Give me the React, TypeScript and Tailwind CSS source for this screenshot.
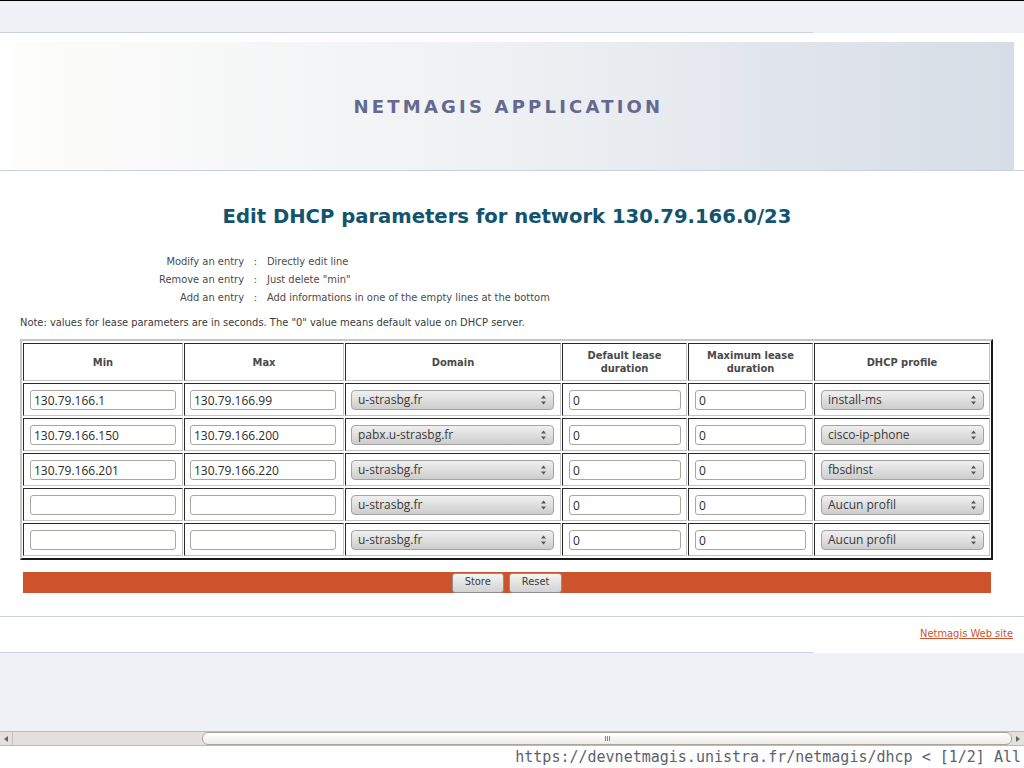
import React from 'react'

const rows = [
  { min: '130.79.166.1', max: '130.79.166.99', domain: 'u-strasbg.fr', profile: 'install-ms' },
  { min: '130.79.166.150', max: '130.79.166.200', domain: 'pabx.u-strasbg.fr', profile: 'cisco-ip-phone' },
  { min: '130.79.166.201', max: '130.79.166.220', domain: 'u-strasbg.fr', profile: 'fbsdinst' },
  { min: '', max: '', domain: 'u-strasbg.fr', profile: 'Aucun profil' },
  { min: '', max: '', domain: 'u-strasbg.fr', profile: 'Aucun profil' },
]

const help = [
  { label: 'Modify an entry', text: 'Directly edit line' },
  { label: 'Remove an entry', text: 'Just delete "min"' },
  { label: 'Add an entry', text: 'Add informations in one of the empty lines at the bottom' },
]

function Field({ value, className }: { value: string; className: string }) {
  return (
    <input
      readOnly
      value={value}
      className={`h-[20px] rounded-[3px] border border-[#a9a6a0] bg-white px-[3px] font-['Open_Sans',sans-serif] text-[12px] text-[#2b2b2b] outline-none ${className}`}
    />
  )
}

function Select({ value, className }: { value: string; className: string }) {
  return (
    <div
      className={`flex h-[20px] items-center justify-between rounded-[4px] border border-[#a3a3a3] bg-linear-to-b from-[#f0f0f0] to-[#cdcdcd] pl-[6px] pr-[6px] font-['Open_Sans',sans-serif] text-[12px] text-[#3a3a3a] ${className}`}
    >
      <span>{value}</span>
      <svg width="7" height="12" viewBox="0 0 7 12" className="text-[#555]">
        <path d="M1 4.5 L3.5 1.5 L6 4.5 Z" fill="currentColor" />
        <path d="M1 7.5 L3.5 10.5 L6 7.5 Z" fill="currentColor" />
      </svg>
    </div>
  )
}

function Cell({ children, className = '' }: { children?: React.ReactNode; className?: string }) {
  return (
    <td
      className={`border border-t-[#2a2a2a] border-l-[#2a2a2a] border-r-[#c4c4c4] border-b-[#c4c4c4] px-[6px] py-0 ${className}`}
    >
      {children}
    </td>
  )
}

function Head({ children }: { children: React.ReactNode }) {
  return (
    <th className="h-[38px] border border-t-[#2a2a2a] border-l-[#2a2a2a] border-r-[#c4c4c4] border-b-[#c4c4c4] text-center text-[11px] font-bold leading-[13px] text-[#4a4a4a]">
      {children}
    </th>
  )
}

function Button({ label }: { label: string }) {
  return (
    <div className="flex h-[20px] items-center rounded-[3px] border border-[#8e8e8e] bg-linear-to-b from-[#f4f4f4] to-[#d2d2d2] px-[12px] text-[11px] text-[#3c3c3c]">
      {label}
    </div>
  )
}

export default function App() {
  return (
    <div className="flex h-[768px] w-[1024px] flex-col overflow-hidden bg-[#eef1f5] font-['DejaVu_Sans_Condensed','DejaVu_Sans',sans-serif]">
      <div className="h-[33px] shrink-0 border-t border-black">
        <div className="h-[31px]" />
        <div className="h-px w-[813px] bg-[#c9d3df]" />
      </div>

      <div className="flex shrink-0 flex-col bg-white">
        <div className="border-b border-[#c7d2e2] pt-[9px]">
          <div className="ml-[13px] flex h-[128px] w-[1001px] items-center justify-center bg-linear-to-r from-[#fdfdfb] via-[#eef0f3] to-[#d6dde6]">
            <h1 className="pr-[10px] font-['DejaVu_Sans',sans-serif] text-[18px] font-bold tracking-[3.2px] text-[#66698f]">
              NETMAGIS APPLICATION
            </h1>
          </div>
        </div>

        <h2 className="mt-[34px] pr-[10px] text-center font-['DejaVu_Sans',sans-serif] text-[19.6px] font-bold leading-[24px] text-[#12536e]">
          Edit DHCP parameters for network 130.79.166.0/23
        </h2>

        <div className="mt-[24px] grid grid-cols-[244px_23px_1fr] text-[11px] leading-[18px] text-[#4a4a4a]">
          {help.map(h => (
            <React.Fragment key={h.label}>
              <div className="text-right">{h.label}</div>
              <div className="text-center">:</div>
              <div>{h.text}</div>
            </React.Fragment>
          ))}
        </div>

        <p className="mt-[9px] pl-[20px] text-[11px] leading-[14px] text-[#3a3a3a]">
          Note: values for lease parameters are in seconds. The "0" value means default value on DHCP server.
        </p>

        <div className="mt-[9px] pl-[20px]">
          <table className="w-[973px] table-fixed border-separate border-spacing-x-[1px] border-spacing-y-[2px] border-2 border-t-[#c6c6c6] border-l-[#c6c6c6] border-r-[#1a1a1a] border-b-[#1a1a1a]">
            <colgroup>
              <col className="w-[160px]" />
              <col className="w-[160px]" />
              <col className="w-[216px]" />
              <col className="w-[125px]" />
              <col className="w-[125px]" />
              <col className="w-[176px]" />
            </colgroup>
            <thead>
              <tr>
                <Head>Min</Head>
                <Head>Max</Head>
                <Head>Domain</Head>
                <Head>Default lease<br />duration</Head>
                <Head>Maximum lease<br />duration</Head>
                <Head>DHCP profile</Head>
              </tr>
            </thead>
            <tbody>
              {rows.map((r, i) => (
                <tr key={i} className="h-[33px]">
                  <Cell><Field value={r.min} className="w-[146px]" /></Cell>
                  <Cell className="pl-[5px]"><Field value={r.max} className="w-[146px]" /></Cell>
                  <Cell className="pl-[5px]"><Select value={r.domain} className="w-[203px]" /></Cell>
                  <Cell><Field value="0" className="w-[112px]" /></Cell>
                  <Cell><Field value="0" className="w-[111px]" /></Cell>
                  <Cell><Select value={r.profile} className="w-[163px]" /></Cell>
                </tr>
              ))}
            </tbody>
          </table>
        </div>

        <div className="ml-[23px] mt-[12px] flex h-[21px] w-[968px] items-center justify-center gap-[5px] bg-[#cc532b]">
          <Button label="Store" />
          <Button label="Reset" />
        </div>

        <div className="mt-[23px] h-px bg-[#c9d3df]" />
        <div className="flex h-[35px] items-center justify-end pr-[11px]">
          <a className="text-[11px] text-[#cc532b] underline">Netmagis Web site</a>
        </div>
        <div className="h-px w-[813px] bg-[#c9d3df]" />
      </div>

      <div className="flex-1" />

      <div className="flex h-[15px] shrink-0 items-center border-y border-[#bdbab3] bg-[#e3e1dc]">
        <div className="flex h-full w-[13px] items-center justify-center border-r border-[#c6c3bc]">
          <svg width="4" height="6" viewBox="0 0 4 6"><path d="M4 0 L0 3 L4 6 Z" fill="#666" /></svg>
        </div>
        <div className="ml-[189px] flex h-[13px] w-[810px] items-center justify-center rounded-[6px] border border-[#a8a59e] bg-linear-to-b from-[#ffffff] to-[#eeece8]">
          <div className="flex gap-[1px]">
            <div className="h-[5px] w-px bg-[#888]" />
            <div className="h-[5px] w-px bg-[#888]" />
            <div className="h-[5px] w-px bg-[#888]" />
          </div>
        </div>
        <div className="flex h-full flex-1 items-center justify-center">
          <svg width="4" height="6" viewBox="0 0 4 6"><path d="M0 0 L4 3 L0 6 Z" fill="#666" /></svg>
        </div>
      </div>

      <div className="flex h-[22px] shrink-0 items-center justify-end bg-white pr-[3px] font-['DejaVu_Sans_Mono',monospace] text-[15px] text-[#5b6270]">
        https://devnetmagis.unistra.fr/netmagis/dhcp &lt; [1/2] All
      </div>
    </div>
  )
}
